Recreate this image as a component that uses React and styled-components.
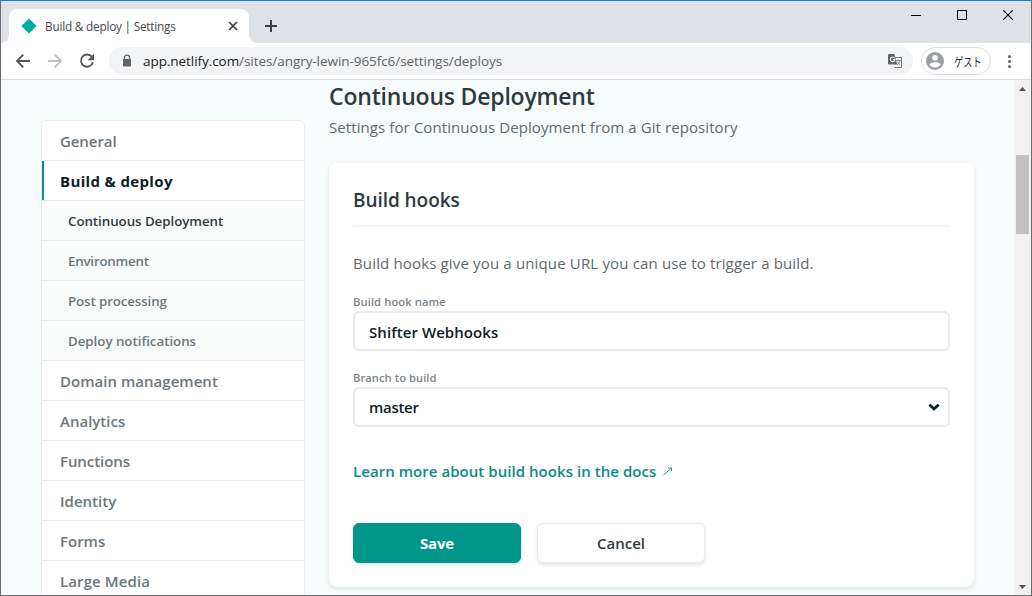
import React from "react";
import styled, { createGlobalStyle } from "styled-components";

const Global = createGlobalStyle`
  * { box-sizing: border-box; }
  html, body { margin: 0; padding: 0; overflow: hidden; }
  body {
    font-family: "Open Sans", "Noto Sans", "Noto Sans CJK JP", sans-serif;
    font-size: 15px;
    color: #2d3b41;
  }
  svg { flex: none; }
`;

const Window = styled.div`
  width: 1032px;
  height: 596px;
  display: flex;
  flex-direction: column;
  overflow: hidden;
  background: #fff;
  border: 1px solid #6c6c6e;
  border-top-color: #1a80d2;
`;

const TabStrip = styled.div`
  flex: none;
  height: 42px;
  display: flex;
  align-items: flex-end;
  background: #dee1e6;
`;

const TabFoot = styled.div`
  width: 8px;
  height: 8px;
  background: radial-gradient(
    circle at ${(p) => (p.$side === "left" ? "0 0" : "100% 0")},
    #dee1e6 7.5px,
    #fff 8.2px
  );
`;

const Tab = styled.div`
  width: 240px;
  height: 34px;
  padding: 0 9px 0 12px;
  display: flex;
  align-items: center;
  background: #fff;
  border-radius: 8px 8px 0 0;
`;

const TabTitle = styled.span`
  flex: 1;
  margin-left: 8px;
  font-size: 11.8px;
  letter-spacing: ${(p) => p.$track}px;
  color: #45494d;
  white-space: nowrap;
`;

const NewTab = styled.div`
  width: 28px;
  height: 34px;
  display: flex;
  align-items: center;
  justify-content: center;
`;

const WindowButtons = styled.div`
  align-self: flex-start;
  margin-left: auto;
  display: flex;
`;

const WindowButton = styled.div`
  width: 46px;
  height: 28px;
  display: flex;
  align-items: center;
  justify-content: center;
`;

const Toolbar = styled.div`
  flex: none;
  height: 37px;
  padding: 0 20px 0 14px;
  display: flex;
  align-items: center;
  background: #fff;
  border-bottom: 1px solid #dadce0;
`;

const NavIcons = styled.div`
  display: flex;
  gap: 16px;
`;

const Omnibox = styled.div`
  width: 804px;
  height: 28px;
  margin-left: 14px;
  padding: 0 10px 0 12px;
  display: flex;
  align-items: center;
  border-radius: 14px;
  background: #f1f3f4;
`;

const Url = styled.span`
  flex: 1;
  margin-left: 10px;
  font-size: 13.5px;
  letter-spacing: ${(p) => p.$track}px;
  color: #5f6368;
  white-space: nowrap;
`;

const Host = styled.span`
  color: #202124;
`;

const Profile = styled.div`
  width: 70px;
  height: 28px;
  margin-left: 8px;
  padding-left: 4px;
  display: flex;
  align-items: center;
  gap: 10px;
  border: 1px solid #dadce0;
  border-radius: 14px;
  font-family: "Noto Sans CJK JP", sans-serif;
  font-size: 12.5px;
  color: #2b2d30;
`;

const ProfileName = styled.span`
  display: inline-block;
  white-space: nowrap;
  transform: scaleX(0.74);
  transform-origin: 0 50%;
`;

const MenuDots = styled.div`
  margin-left: auto;
  display: flex;
  flex-direction: column;
  gap: 2px;
`;

const Dot = styled.i`
  width: 3px;
  height: 3px;
  border-radius: 50%;
  background: #5f6368;
`;

const Viewport = styled.div`
  flex: 1;
  min-height: 0;
  display: flex;
  background: #f7fbfc;
`;

const Page = styled.div`
  flex: 1;
  display: flex;
  align-items: flex-start;
  gap: 24px;
  padding-left: 40px;
  overflow: hidden;
`;

const Sidebar = styled.nav`
  flex: none;
  width: 264px;
  margin-top: 40px;
  background: #fff;
  border: 1px solid #e9ebeb;
  border-radius: 6px 6px 0 0;
  overflow: hidden;
`;

const NavRow = styled.div`
  height: 40px;
  padding-left: ${(p) => (p.$sub ? 26 : 18)}px;
  padding-top: 1px;
  display: flex;
  align-items: center;
  border-bottom: 1px solid #e9ebeb;
  background: ${(p) => (p.$sub ? "#fafbfb" : "#fff")};
  box-shadow: ${(p) => (p.$active ? "inset 2px 0 #00968a" : "none")};
  font-size: ${(p) => (p.$sub ? 13.3 : 15)}px;
  font-weight: ${(p) => (p.$active ? 700 : 600)};
  letter-spacing: ${(p) => p.$track || 0}px;
  color: ${(p) => (p.$active ? "#0e1e25" : p.$current ? "#2d3b41" : "#6c777b")};
  white-space: nowrap;
`;

const Main = styled.main`
  width: 645px;
  flex: none;
`;

const PageTitle = styled.h1`
  margin: 0;
  height: 32px;
  line-height: 33px;
  font-size: 23px;
  font-weight: 600;
  letter-spacing: ${(p) => p.$track}px;
  white-space: nowrap;
`;

const Lead = styled.p`
  margin: 0;
  height: 32px;
  line-height: 31px;
  color: #61696d;
  letter-spacing: ${(p) => p.$track}px;
  white-space: nowrap;
`;

const Card = styled.section`
  height: 424px;
  margin-top: 19px;
  padding: 24px;
  background: #fff;
  border-radius: 8px;
  box-shadow: 0 2px 4px rgba(14, 30, 37, 0.12);
`;

const CardTitle = styled.h2`
  margin: 0;
  height: 40px;
  line-height: 26px;
  border-bottom: 2px solid #f5f6f6;
  font-size: 19px;
  font-weight: 600;
  letter-spacing: ${(p) => p.$track}px;
`;

const Intro = styled.p`
  margin: 23px 0 0;
  line-height: 26px;
  color: #61696d;
  letter-spacing: ${(p) => p.$track}px;
  white-space: nowrap;
`;

const Field = styled.label`
  display: block;
  margin-top: ${(p) => p.$gap}px;
`;

const FieldLabel = styled.span`
  display: block;
  height: 16px;
  line-height: 16px;
  font-size: 11.2px;
  font-weight: 600;
  letter-spacing: ${(p) => p.$track}px;
  color: #7d868a;
`;

const Control = styled.div`
  height: 40px;
  margin-top: 1px;
  padding: ${(p) => p.$drop || 0}px 8px 0 14px;
  display: flex;
  align-items: center;
  justify-content: space-between;
  border: 2px solid #e9ebeb;
  border-radius: 6px;
  font-weight: 600;
  letter-spacing: ${(p) => p.$track}px;
  color: #0e1e25;
`;

const DocsLink = styled.a`
  display: flex;
  align-items: center;
  gap: 7px;
  height: 26px;
  margin-top: 31px;
  font-weight: 600;
  letter-spacing: ${(p) => p.$track}px;
  color: #0a8c81;
  white-space: nowrap;
`;

const Actions = styled.div`
  display: flex;
  gap: 16px;
  margin-top: 39px;
`;

const Button = styled.button`
  width: 168px;
  height: 40px;
  padding: 0 0 1px;
  border: 1px solid ${(p) => (p.$primary ? "#00968a" : "#e9ebeb")};
  border-radius: 6px;
  background: ${(p) => (p.$primary ? "#00968a" : "#fff")};
  box-shadow: 0 2px 4px rgba(14, 30, 37, 0.12);
  font: ${(p) => (p.$primary ? 700 : 600)} 15px "Open Sans", sans-serif;
  letter-spacing: ${(p) => p.$track}px;
  color: ${(p) => (p.$primary ? "#fff" : "#2d3b41")};
`;

const Scrollbar = styled.div`
  flex: none;
  width: 17px;
  display: flex;
  flex-direction: column;
  align-items: center;
  background: #f1f1f1;
`;

const ScrollArrow = styled.div`
  height: 17px;
  display: flex;
  align-items: center;
`;

const Thumb = styled.div`
  width: 13px;
  height: 79px;
  margin: 58px 0 auto;
  background: #c1c1c1;
`;

const sections = [
  { label: "General", track: -0.08 },
  { label: "Build & deploy", active: true, track: 0.35 },
  { label: "Continuous Deployment", sub: true, current: true, track: -0.04 },
  { label: "Environment", sub: true, track: -0.2 },
  { label: "Post processing", sub: true, track: -0.1 },
  { label: "Deploy notifications", sub: true, track: -0.02 },
  { label: "Domain management", track: 0.03 },
  { label: "Analytics" },
  { label: "Functions", track: -0.08 },
  { label: "Identity" },
  { label: "Forms" },
  { label: "Large Media", track: 0.1 },
];

const BackArrow = ({ color, flip }) => (
  <svg width="16" height="16" viewBox="0 0 16 16" fill="none" stroke={color} strokeWidth="1.9"
    transform={flip ? "scale(-1 1)" : undefined}>
    <path d="M15 8H2.5M8.3 1.7L2 8l6.3 6.3" />
  </svg>
);

export default function App() {
  return (
    <Window>
      <Global />
      <TabStrip>
        <TabFoot $side="left" />
        <Tab>
          <svg width="16" height="16" viewBox="0 0 16 16">
            <path d="M8 .4L15.6 8 8 15.6.4 8z" fill="#00ad9f" />
          </svg>
          <TabTitle $track={-0.22}>Build &amp; deploy | Settings</TabTitle>
          <svg width="14" height="14" viewBox="0 0 14 14" stroke="#3c4043" strokeWidth="1.7">
            <path d="M3 3l8 8M11 3l-8 8" />
          </svg>
        </Tab>
        <TabFoot $side="right" />
        <NewTab>
          <svg width="14" height="14" viewBox="0 0 14 14" stroke="#3c4043" strokeWidth="2">
            <path d="M1 7h12M7 1v12" />
          </svg>
        </NewTab>
        <WindowButtons>
          <WindowButton>
            <svg width="10" height="10" viewBox="0 0 10 10"><path d="M0 5.5h10" stroke="#000" /></svg>
          </WindowButton>
          <WindowButton>
            <svg width="10" height="10" viewBox="0 0 10 10" fill="none"><path d="M.5.5h9v9h-9z" stroke="#000" /></svg>
          </WindowButton>
          <WindowButton>
            <svg width="10" height="10" viewBox="0 0 10 10"><path d="M0 0l10 10M10 0L0 10" stroke="#000" strokeWidth="1.1" /></svg>
          </WindowButton>
        </WindowButtons>
      </TabStrip>
      <Toolbar>
        <NavIcons>
          <BackArrow color="#55595e" />
          <BackArrow color="#bbbdbf" flip />
          <svg width="16" height="16" viewBox="0 0 16 16" fill="none">
            <path d="M13.2 4.2A6.1 6.1 0 1 0 14 9.2" stroke="#55595e" strokeWidth="1.9" />
            <path d="M15 .8v6.4H8.6z" fill="#55595e" />
          </svg>
        </NavIcons>
        <Omnibox>
          <svg width="12" height="14" viewBox="0 0 12 14">
            <path d="M3.4 6V3.7a2.6 2.6 0 0 1 5.2 0V6" fill="none" stroke="#5f6368" strokeWidth="1.3" />
            <rect x="2" y="5" width="8" height="7.4" rx="1" fill="#5f6368" />
          </svg>
          <Url $track={-0.06}>
            <Host>app.netlify.com</Host>/sites/angry-lewin-965fc6/settings/deploys
          </Url>
          <svg width="16" height="16" viewBox="0 0 16 16">
            <path d="M6 4.5h8.5v10H7.5" fill="#f1f3f4" stroke="#74787c" />
            <path d="M2 1h5.4l2.8 10.6H2a1 1 0 0 1-1-1V2a1 1 0 0 1 1-1z" fill="#5f6368" />
            <path d="M7.6 5.2a2.3 2.3 0 1 0 .3 1.4H5.8" fill="none" stroke="#f1f3f4" strokeWidth="1.1" />
            <path d="M9.4 7.5h4.4M11.6 6.4v1.1M13 7.5c-.4 2-1.6 3.3-2.8 4.3M10.6 9c.6 1.2 1.5 2.2 2.7 3" fill="none" stroke="#74787c" strokeWidth=".9" />
          </svg>
        </Omnibox>
        <Profile>
          <svg width="18" height="18" viewBox="0 0 18 18">
            <circle cx="9" cy="9" r="9" fill="#9aa0a6" />
            <circle cx="9" cy="5.8" r="2.8" fill="#fff" />
            <path d="M3.4 12.6c1-1.8 3.6-2.4 5.6-2.4s4.6.6 5.6 2.4a6.7 6.7 0 0 1-11.2 0z" fill="#fff" />
          </svg>
          <ProfileName>ゲスト</ProfileName>
        </Profile>
        <MenuDots><Dot /><Dot /><Dot /></MenuDots>
      </Toolbar>
      <Viewport>
        <Page>
          <Sidebar>
            {sections.map((s) => (
              <NavRow key={s.label} $sub={s.sub} $active={s.active} $current={s.current} $track={s.track}>
                {s.label}
              </NavRow>
            ))}
          </Sidebar>
          <Main>
            <PageTitle $track={-0.2}>Continuous Deployment</PageTitle>
            <Lead $track={0.09}>Settings for Continuous Deployment from a Git repository</Lead>
            <Card>
              <CardTitle $track={-0.06}>Build hooks</CardTitle>
              <Intro $track={0.155}>Build hooks give you a unique URL you can use to trigger a build.</Intro>
              <Field $gap={18}>
                <FieldLabel $track={0.1}>Build hook name</FieldLabel>
                <Control $track={0.07} $drop={2}>Shifter Webhooks</Control>
              </Field>
              <Field $gap={19}>
                <FieldLabel $track={0.05}>Branch to build</FieldLabel>
                <Control $track={-0.3}>
                  master
                  <svg width="12" height="8" viewBox="0 0 12 8" fill="none">
                    <path d="M1.3 1.8L6 5.9l4.7-4.1" stroke="#0e1e25" strokeWidth="2.8" />
                  </svg>
                </Control>
              </Field>
              <DocsLink $track={0.05}>
                Learn more about build hooks in the docs
                <svg width="10" height="10" viewBox="0 0 10 10" fill="none" stroke="#0a8c81" strokeWidth=".9">
                  <path d="M.5 9L8.5 2M5 2h3.5v3" />
                </svg>
              </DocsLink>
              <Actions>
                <Button $primary $track={-0.2}>Save</Button>
                <Button $track={0}>Cancel</Button>
              </Actions>
            </Card>
          </Main>
        </Page>
        <Scrollbar>
          <ScrollArrow>
            <svg width="7" height="4" viewBox="0 0 7 4"><path d="M0 4L3.5 0 7 4z" fill="#505050" /></svg>
          </ScrollArrow>
          <Thumb />
          <ScrollArrow>
            <svg width="7" height="4" viewBox="0 0 7 4"><path d="M0 0l3.5 4L7 0z" fill="#505050" /></svg>
          </ScrollArrow>
        </Scrollbar>
      </Viewport>
    </Window>
  );
}
